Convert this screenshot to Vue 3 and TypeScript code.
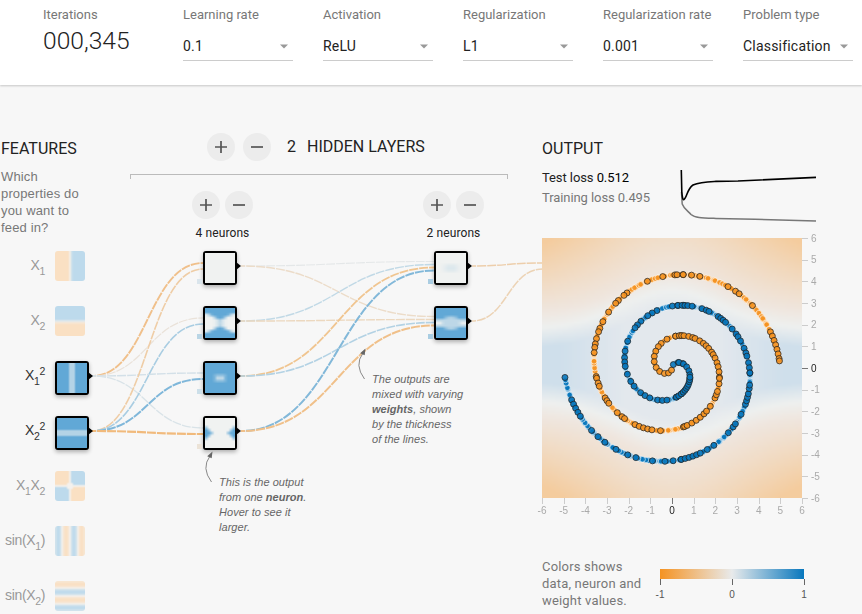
<script setup lang="ts">
import { onMounted, ref } from 'vue'

type Rgb = [number, number, number]
type Field = (u: number, v: number) => Rgb

const clamp = (n: number, lo = 0, hi = 1): number => Math.min(hi, Math.max(lo, n))
const mix = (a: Rgb, b: Rgb, t: number): Rgb => {
  const k = clamp(t)
  return [0, 1, 2].map((i) => a[i] + (b[i] - a[i]) * k) as Rgb
}

const NEUTRAL: Rgb = [240, 242, 241]
const BLUE: Rgb = [97, 168, 214]
const SOFT_BLUE: Rgb = [189, 218, 236]
const SOFT_ORANGE: Rgb = [250, 224, 195]
const PALE: Rgb = [244, 241, 237]

const soft = (t: number): Rgb => (t > 0 ? mix(PALE, SOFT_BLUE, t) : mix(PALE, SOFT_ORANGE, -t))
const strong = (t: number): Rgb => mix(NEUTRAL, BLUE, t)

const fields: Record<string, Field> = {
  x1: (u) => soft((u - 0.02) * 7),
  x2: (_u, v) => soft((v + 0.05) * 7),
  x1sq: (u) => strong(Math.abs(u) < 0.2 ? 0.42 : 1),
  x2sq: (_u, v) => strong(Math.abs(v) < 0.2 ? 0.42 : 1),
  x1x2: (u, v) => (Math.hypot(u, v) < 0.26 ? PALE : soft(u * v * 60)),
  sin1: (u) => soft(Math.sin(u * 6) * 1.05),
  sin2: (_u, v) => soft(Math.sin(v * 6) * 1.05),
  n1: () => NEUTRAL,
  n2: (u, v) => {
    const half = 0.1 + 0.42 * clamp(Math.abs(u) * 1.2)
    const inner = 0.32 * (1 - clamp(Math.abs(u) * 2.4))
    return strong(Math.max(inner, clamp((Math.abs(v) - half) * 5)))
  },
  n3: (u, v) => strong(clamp(Math.max((Math.abs(u) - 0.12) * 3.4, (Math.abs(v) - 0.02) * 4.2), 0.3, 1)),
  n4: (u, v) => strong((Math.abs(u) - 0.38 - Math.abs(v) * 1.05) * 3.6),
  m1: (u, v) => strong(0.14 * clamp((0.68 - Math.abs(u)) * 2) * clamp((0.3 - Math.abs(v)) * 6)),
  m2: (u, v) => {
    const band = clamp((Math.abs(v) - 0.12) * 6)
    const r = Math.hypot(u / 0.75, v / 0.55)
    return strong(mix([band, 0, 0], [0.36, 0, 0], clamp((1 - r) * 2.6))[0])
  },
  output: (u, v) => {
    const x = Math.abs(u * 6)
    const y = Math.abs(v * 6 - 0.15)
    const d = y - (1.65 + 1.75 * Math.exp(-((x / 3.3) ** 2)))
    const edge: Rgb = [238, 240, 239]
    if (d < 0) {
      const core = mix([227, 232, 237], [207, 223, 235], (x - 2.2) / 3)
      return mix(edge, core, -d / 0.9)
    }
    const warm: Rgb = [239, 230, 222]
    if (d < 0.8) return mix(edge, warm, d / 0.8)
    return mix(warm, [244, 204, 158], (d - 0.8) / 5.2 + ((d - 0.8) / 3.4) * (x / 6) ** 2 * 0.45)
  },
}

const root = ref<HTMLElement | null>(null)

onMounted(() => {
  root.value?.querySelectorAll<HTMLCanvasElement>('canvas[data-field]').forEach((canvas) => {
    const ctx = canvas.getContext('2d')
    const field = fields[canvas.dataset.field ?? '']
    if (!ctx || !field) return
    const n = canvas.width
    const img = ctx.createImageData(n, n)
    for (let row = 0; row < n; row++) {
      for (let col = 0; col < n; col++) {
        const c = field(((col + 0.5) / n) * 2 - 1, 1 - ((row + 0.5) / n) * 2)
        img.data.set([c[0], c[1], c[2], 255], (row * n + col) * 4)
      }
    }
    ctx.putImageData(img, 0, 0)
  })
})

const controls = [
  { label: 'Learning rate', value: '0.1' },
  { label: 'Activation', value: 'ReLU' },
  { label: 'Regularization', value: 'L1' },
  { label: 'Regularization rate', value: '0.001' },
  { label: 'Problem type', value: 'Classification' },
]

const features = [
  { id: 'x1', parts: [['X', '1', '']], active: false },
  { id: 'x2', parts: [['X', '2', '']], active: false },
  { id: 'x1sq', parts: [['X', '1', '2']], active: true },
  { id: 'x2sq', parts: [['X', '2', '2']], active: true },
  { id: 'x1x2', parts: [['X', '1', ''], ['X', '2', '']], active: false },
  { id: 'sin1', parts: [['sin(X', '1', ''], [')', '', '']], active: false },
  { id: 'sin2', parts: [['sin(X', '2', ''], [')', '', '']], active: false },
]

const layers = [
  { label: '4 neurons', neurons: [['n1', '#dae5ec'], ['n2', '#b9d5e5'], ['n3', '#ccdfe9'], ['n4', '#ece3d7']] },
  { label: '2 neurons', neurons: [['m1', '#aacde2'], ['m2', '#a9cde2']] },
]

// x/y of the source tip, x/y of the target edge, colour, width
const linkData: [number, number, number, number, string, number][] = [
  [92, 376, 203, 263, '#f0c08b', 1.9],
  [92, 376, 203, 318, '#eae2d9', 1.2],
  [92, 376, 203, 373, '#d3e0e8', 1.4],
  [92, 376, 203, 428, '#d9e3e8', 1.3],
  [92, 431, 203, 269, '#efcda6', 1.6],
  [92, 431, 203, 324, '#a9cde2', 1.6],
  [92, 431, 203, 379, '#7fb7da', 2],
  [92, 431, 203, 434, '#f1ba7c', 2.2],
  [241, 266, 434, 261.5, '#e4e7e8', 1.1],
  [241, 266, 434, 316.5, '#ecdcc9', 1.4],
  [241, 321, 434, 264.5, '#c1d9e6', 1.4],
  [241, 321, 434, 319.5, '#ecd8bf', 1.4],
  [241, 376, 434, 267.5, '#f0c590', 1.8],
  [241, 376, 434, 322.5, '#b3d2e4', 1.6],
  [241, 431, 434, 270.5, '#82b8d9', 2],
  [241, 431, 434, 325.5, '#f0c08a', 2],
  [472, 266, 543, 263, '#edceab', 1.5],
  [472, 321, 543, 269, '#ecd3b5', 1.5],
]
const links = linkData.map(([x1, y1, x2, y2, color, width]) => {
  const m = (x1 + x2) / 2
  return { d: `M${x1},${y1}C${m},${y1} ${m},${y2} ${x2},${y2}`, color, width }
})

const spiral = (s: number, turn: number): [number, number] => {
  const t = 3.5 * Math.PI * s + turn
  const r = 5 * s * (260 / 12)
  return [130 + r * Math.sin(t), 130 - r * Math.cos(t)]
}

// Radius grows with s, so sampling on sqrt keeps the spacing along the arm even
const trainDots = (turn: number): [number, number][] =>
  Array.from({ length: 255 }, (_, i) =>
    spiral(0.992 * Math.sqrt(Math.max(0, i + 0.9 * Math.sin(i * 2.3)) / 255), turn),
  ).slice(2)

const snap = (points: number[][], turn: number): [number, number][] =>
  points.map(([px, py]) => {
    let best: [number, number] = [0, 0]
    let dist = Infinity
    for (let s = 0.02; s <= 0.996; s += 0.002) {
      const p = spiral(s, turn)
      const d = Math.hypot(p[0] - px, p[1] - py)
      if (d < dist) {
        dist = d
        best = p
      }
    }
    return best
  })

// Held-out samples, grouped by plot quadrant, stored in thirds of a pixel from the quadrant's origin
const quadrant = (ox: number, oy: number, pts: number[][]): number[][] =>
  pts.map(([x, y]) => [ox + x / 3, oy + y / 3])

const testOrange = snap([
  ...quadrant(-7, -8, [[337, 154], [383, 139], [419, 134], [443, 133], [276, 188], [266, 195], [248, 212], [241, 220], [221, 246], [203, 275], [195, 294], [190, 307], [184, 325], [181, 340], [180, 350], [177, 368], [183, 440], [438, 317], [422, 318], [395, 327], [379, 341], [370, 349], [362, 363], [358, 379], [361, 395], [367, 410], [376, 421], [388, 430], [400, 427], [410, 418]]),
  ...quadrant(133, -8, [[3, 134], [25, 134], [50, 135], [75, 139], [158, 170], [181, 183], [193, 191], [232, 227], [285, 304], [291, 316], [297, 330], [302, 344], [306, 360], [308, 370], [312, 385], [315, 401], [2, 318], [14, 317], [20, 317], [28, 318], [42, 320], [52, 323], [60, 325], [75, 332], [84, 340], [92, 347], [100, 356], [108, 367], [113, 376], [120, 384], [125, 398], [129, 410], [132, 426], [134, 440]]),
  ...quadrant(-7, 132, [[184, 25], [189, 38], [193, 48], [208, 85], [216, 93], [222, 101], [246, 127], [262, 140], [269, 147], [299, 163], [313, 170], [325, 173], [338, 177], [349, 179], [376, 182], [447, 170]]),
  ...quadrant(133, 132, [[28, 171], [36, 166], [52, 158], [64, 151], [76, 142], [88, 131], [95, 122], [106, 108], [120, 84], [124, 76], [128, 64], [133, 40], [132, 26]]),
], Math.PI)

const testBlue = snap([
  ...quadrant(-7, -8, [[446, 226], [428, 226], [411, 228], [366, 242], [352, 249], [338, 257], [316, 274], [307, 284], [300, 293], [277, 335], [270, 363], [268, 383], [269, 395], [270, 410], [277, 432], [89, 442], [415, 404], [430, 398], [443, 400]]),
  ...quadrant(133, -8, [[8, 227], [20, 226], [28, 226], [40, 227], [52, 228], [82, 236], [93, 240], [102, 244], [130, 258], [138, 263], [146, 270], [152, 275], [174, 298], [183, 310], [189, 320], [194, 332], [208, 356], [213, 368], [216, 380], [220, 396], [222, 411], [224, 427], [12, 397], [25, 402], [34, 411], [41, 423], [44, 435], [44, 445]]),
  ...quadrant(-7, 132, [[109, 90], [115, 100], [120, 113], [128, 126], [136, 139], [169, 181], [189, 200], [210, 216], [242, 238], [278, 254], [302, 263], [352, 272], [389, 274], [414, 272], [438, 268], [287, 34], [298, 47], [316, 68], [330, 76], [344, 84], [368, 90], [381, 91], [396, 90], [424, 80], [440, 72]]),
  ...quadrant(133, 132, [[18, 268], [30, 265], [42, 262], [54, 258], [65, 254], [76, 249], [97, 238], [117, 226], [160, 188], [176, 170], [181, 160], [198, 132], [212, 103], [216, 92], [220, 80], [222, 70], [224, 58], [225, 45], [224, 8], [5, 82], [12, 79], [20, 74], [26, 68], [32, 62], [36, 56], [40, 50], [42, 43], [44, 36], [45, 29], [45, 22]]),
], 0)

const series = [
  { color: '#f59322', train: trainDots(Math.PI), test: testOrange },
  { color: '#0877bd', train: trainDots(0), test: testBlue },
]

const ticks = Array.from({ length: 13 }, (_, i) => i - 6)
const tickAt = (n: number): number => ((n + 6) * 260) / 12
</script>

<template>
  <div ref="root" class="page">
    <header class="topbar">
      <div class="iterations">
        <span class="label">Iterations</span>
        <span class="count">000,345</span>
      </div>
      <div v-for="c in controls" :key="c.label" class="control">
        <span class="label">{{ c.label }}</span>
        <div class="select">
          <span>{{ c.value }}</span>
          <svg width="8" height="5" viewBox="0 0 8 5"><path d="M0 0.5H8L4 4.5Z" fill="#999" /></svg>
        </div>
      </div>
    </header>

    <main class="main">
      <svg class="links" width="862" height="529" viewBox="0 85 862 529">
        <path
          v-for="(l, i) in links" :key="i" :d="l.d" fill="none" :stroke="l.color"
          :stroke-width="l.width" stroke-dasharray="9 1" stroke-dashoffset="5"
        />
      </svg>

      <section class="features">
        <h2>FEATURES</h2>
        <p class="hint">Which properties do you want to feed in?</p>
        <div class="feature-list">
          <div v-for="f in features" :key="f.id" class="feature" :class="{ active: f.active }">
            <span class="name"><template v-for="(p, i) in f.parts" :key="i">{{ p[0] }}<sub v-if="p[1]">{{ p[1] }}</sub><sup v-if="p[2]">{{ p[2] }}</sup></template></span>
            <div class="node" :class="{ muted: !f.active }">
              <canvas width="15" height="15" :data-field="f.id" />
            </div>
          </div>
        </div>
      </section>

      <section class="hidden">
        <div class="hidden-head">
          <button class="round"><svg width="14" height="14"><path d="M7 1V13M1 7H13" /></svg></button>
          <button class="round"><svg width="14" height="14"><path d="M1 7H13" /></svg></button>
          <h2 class="num">2</h2>
          <h2>HIDDEN LAYERS</h2>
        </div>
        <div class="bracket" />
        <div class="layers">
          <div v-for="layer in layers" :key="layer.label" class="layer">
            <div class="layer-buttons">
              <button class="round"><svg width="14" height="14"><path d="M7 1V13M1 7H13" /></svg></button>
              <button class="round"><svg width="14" height="14"><path d="M1 7H13" /></svg></button>
            </div>
            <span class="layer-label">{{ layer.label }}</span>
            <div class="neurons">
              <div v-for="n in layer.neurons" :key="n[0]" class="node">
                <canvas width="11" height="11" :data-field="n[0]" />
                <i class="bias" :style="{ background: n[1] }" />
              </div>
            </div>
          </div>
        </div>
      </section>

      <section class="output">
        <h2>OUTPUT</h2>
        <div class="loss">
          <div class="loss-text">
            <span class="test">Test loss <b>0.512</b></span>
            <span class="train">Training loss 0.495</span>
          </div>
          <svg width="140" height="56" viewBox="678 168 140 56" fill="none">
            <path d="M681.5 192L682.2 204C684 209 688 211 691 214.5C695 218 702 218 716 218.4L755 219.3L816 220.9" stroke="#777" stroke-width="1.5" />
            <path d="M681.3 170L681.8 192Q682.5 200 683.6 199.8C687 198 687 189 693 185C700 182 708 181.8 716 181.4L738 181L760 180L816 177.4" stroke="#000" stroke-width="1.6" />
          </svg>
        </div>

        <div class="plot">
          <canvas width="100" height="100" data-field="output" />
          <svg class="points" width="300" height="285">
            <g v-for="s in series" :key="s.color" :fill="s.color">
              <circle v-for="(p, i) in s.train" :key="'a' + i" :cx="p[0]" :cy="p[1]" r="2.8" class="dot-train" />
            </g>
            <g v-for="s in series" :key="s.color + 't'" :fill="s.color">
              <circle v-for="(p, i) in s.test" :key="'b' + i" :cx="p[0]" :cy="p[1]" r="3" class="dot-test" />
            </g>
            <g v-for="n in ticks" :key="n" class="tick" :class="{ zero: n === 0 }">
              <path :d="`M${Math.round(tickAt(n)) + 0.5} 260v6M260 ${Math.round(260 - tickAt(n)) + 0.5}h6`" />
              <text :x="tickAt(n)" y="276" text-anchor="middle">{{ n }}</text>
              <text x="269" :y="263.5 - tickAt(n)">{{ n }}</text>
            </g>
          </svg>
        </div>

        <div class="legend">
          <p>Colors shows<br />data, neuron and<br />weight values.</p>
          <svg width="160" height="40">
            <defs>
              <linearGradient id="scale">
                <stop offset="0" stop-color="#f59322" />
                <stop offset="0.5" stop-color="#e8eaeb" />
                <stop offset="1" stop-color="#0877bd" />
              </linearGradient>
            </defs>
            <rect x="8" y="0" width="144" height="10" fill="url(#scale)" />
            <path d="M8.5 10v6M80.5 10v6M152.5 10v6" stroke="#666" />
            <g text-anchor="middle"><text x="8" y="29">-1</text><text x="80" y="29">0</text><text x="152" y="29">1</text></g>
          </svg>
        </div>
      </section>

      <aside class="callout weights">
        <svg width="15" height="34" viewBox="0 0 15 34"><path d="M7.500 31Q-3 17 6 5" /><path class="tip" d="M8.500 0.500L3.200 5.200L7.700 7.200Z" /></svg>
        <p>The outputs are<br />mixed with varying<br /><b>weights</b>, shown<br />by the thickness<br />of the lines.</p>
      </aside>
      <aside class="callout neuron">
        <svg width="15" height="34" viewBox="0 0 15 34"><path d="M7.500 31Q-3 17 6 5" /><path class="tip" d="M8.500 0.500L3.200 5.200L7.700 7.200Z" /></svg>
        <p>This is the output<br />from one <b>neuron</b>.<br />Hover to see it<br />larger.</p>
      </aside>
    </main>
  </div>
</template>

<style>
body {
  margin: 0;
  background: #f7f7f7;
  overflow: hidden;
}
</style>

<style scoped>
.page {
  width: 862px;
  height: 614px;
  overflow: hidden;
  background: #f7f7f7;
  color: #222;
  font-family: "Liberation Sans", Arial, sans-serif;
  font-size: 13px;
}
.topbar {
  position: relative;
  box-sizing: border-box;
  height: 85px;
  padding: 6px 0 0 43px;
  display: flex;
  gap: 30px;
  background: #fff;
  box-shadow: 0 1px 2px rgba(0, 0, 0, 0.2);
}
.iterations, .control {
  display: flex;
  flex-direction: column;
  flex: 0 0 110px;
}
.label {
  line-height: 17px;
  color: #777;
  font-family: Roboto, sans-serif;
  white-space: nowrap;
}
.count {
  margin-top: 4px;
  font: 300 24.6px/28px Roboto, sans-serif;
}
.select {
  display: flex;
  justify-content: space-between;
  align-items: center;
  box-sizing: border-box;
  height: 29px;
  margin-top: 9px;
  padding: 0 5px 0 0;
  border-bottom: 1px solid #ccc;
  font: 400 14px/29px Roboto, sans-serif;
  letter-spacing: 0.2px;
}
h2 {
  margin: 0;
  font: 400 16px/20px Roboto, sans-serif;
}
.main {
  position: relative;
  display: grid;
  grid-template-columns: 130px 412px 320px;
  height: 529px;
}
.links {
  position: absolute;
  left: 0;
  top: 0;
}
.features {
  padding: 54px 0 0 1px;
}
.hint {
  width: 88px;
  margin: 9px 0 0;
  line-height: 17px;
  color: #777;
  letter-spacing: 0.15px;
}
.feature-list {
  display: flex;
  flex-direction: column;
  gap: 21px;
  margin-top: 15px;
}
.feature {
  display: grid;
  grid-template-columns: 44px 34px;
  column-gap: 10px;
  height: 34px;
  color: #999;
}
.feature.active {
  color: #333;
}
.name {
  justify-self: end;
  line-height: 28px;
  font-size: 14px;
  letter-spacing: -0.35px;
  white-space: nowrap;
}
sub, sup {
  font-size: 10.500px;
  line-height: 0;
}
sub {
  vertical-align: -5px;
}
sup {
  vertical-align: 5px;
}
.node {
  position: relative;
  box-sizing: border-box;
  width: 34px;
  height: 34px;
  border: 2px solid #000;
  border-radius: 3px;
  background: #000;
  box-shadow: 0 2px 4px rgba(0, 0, 0, 0.3);
}
.node canvas {
  display: block;
  width: 30px;
  height: 30px;
}
.node::after {
  content: "";
  position: absolute;
  left: 31px;
  top: 9px;
  border: 4px solid transparent;
  border-left: 5px solid #000;
  border-right: 0;
}
.node.muted {
  width: 30px;
  height: 30px;
  border: 0;
  background: none;
  box-shadow: none;
}
.node.muted::after {
  display: none;
}
.node.muted canvas {
  border-radius: 3px;
}
.bias {
  position: absolute;
  left: -8px;
  top: 26px;
  width: 5px;
  height: 5px;
}
.hidden {
  padding-top: 48px;
}
.hidden-head {
  display: flex;
  align-items: center;
  height: 28px;
  padding-left: 77px;
}
.hidden-head .round + .round {
  margin-left: 8px;
}
.hidden-head .num {
  margin: 0 11px 0 16px;
}
.round {
  display: flex;
  align-items: center;
  justify-content: center;
  width: 28px;
  height: 28px;
  padding: 0;
  border: 0;
  border-radius: 50%;
  background: #ececec;
}
.round path {
  fill: none;
  stroke: #555;
  stroke-width: 1.700;
}
.bracket {
  box-sizing: border-box;
  width: 378px;
  height: 5px;
  margin-top: 13px;
  border: 1px solid #bbb;
  border-bottom: 0;
}
.layers {
  display: flex;
  gap: 170px;
  padding: 12px 0 0 62px;
}
.layer {
  flex: 0 0 61px;
  display: flex;
  flex-direction: column;
}
.layer-buttons {
  display: flex;
  gap: 5px;
}
.layer-label {
  margin-top: 6px;
  text-align: center;
  font: 400 12px/16px Roboto, sans-serif;
  letter-spacing: 0.1px;
}
.neurons {
  display: flex;
  flex-direction: column;
  gap: 21px;
  padding: 10px 0 0 11px;
}
.output {
  padding-top: 54px;
  min-width: 0;
}
.loss {
  display: flex;
  justify-content: space-between;
  width: 276px;
  height: 56px;
  margin-top: 9px;
}
.loss-text {
  display: flex;
  flex-direction: column;
  line-height: 20px;
  font-family: Roboto, sans-serif;
  white-space: nowrap;
  letter-spacing: -0.08px;
}
.test b {
  font-weight: 400;
  color: #000;
}
.train {
  color: #777;
}
.plot {
  position: relative;
  height: 260px;
  margin-top: 14px;
}
.plot canvas {
  display: block;
  width: 260px;
  height: 260px;
}
.points {
  position: absolute;
  left: 0;
  top: 0;
  overflow: visible;
}
.dot-train {
  stroke: #fff;
  stroke-width: 0.6;
  fill-opacity: 0.9;
}
.dot-test {
  stroke: #222;
  stroke-width: 1;
  stroke-opacity: 0.75;
  fill-opacity: 0.9;
}
.tick path {
  stroke: #ccc;
}
.tick text {
  fill: #aaa;
  font-size: 10px;
}
.tick.zero path {
  stroke: #777;
}
.tick.zero text {
  fill: #222;
}
.legend {
  display: flex;
  gap: 10px;
  margin-top: 60px;
  color: #777;
}
.legend p {
  flex: 0 0 100px;
  margin: 0;
  line-height: 17px;
  font-family: Roboto, sans-serif;
  letter-spacing: 0.18px;
  white-space: nowrap;
}
.legend svg {
  margin-top: 11px;
  overflow: visible;
}
.legend text {
  fill: #555;
  font-size: 10px;
}
.callout {
  position: absolute;
  display: flex;
  color: #666;
  font-size: 11px;
  line-height: 15px;
  font-style: italic;
  letter-spacing: 0.04px;
  white-space: nowrap;
}
.callout svg {
  fill: none;
  stroke: #888;
  overflow: visible;
}
.callout .tip {
  fill: #666;
  stroke: none;
}
.callout p {
  margin: 24px 0 0;
}
.weights {
  left: 357px;
  top: 263px;
}
.neuron {
  left: 204px;
  top: 366px;
}
</style>
